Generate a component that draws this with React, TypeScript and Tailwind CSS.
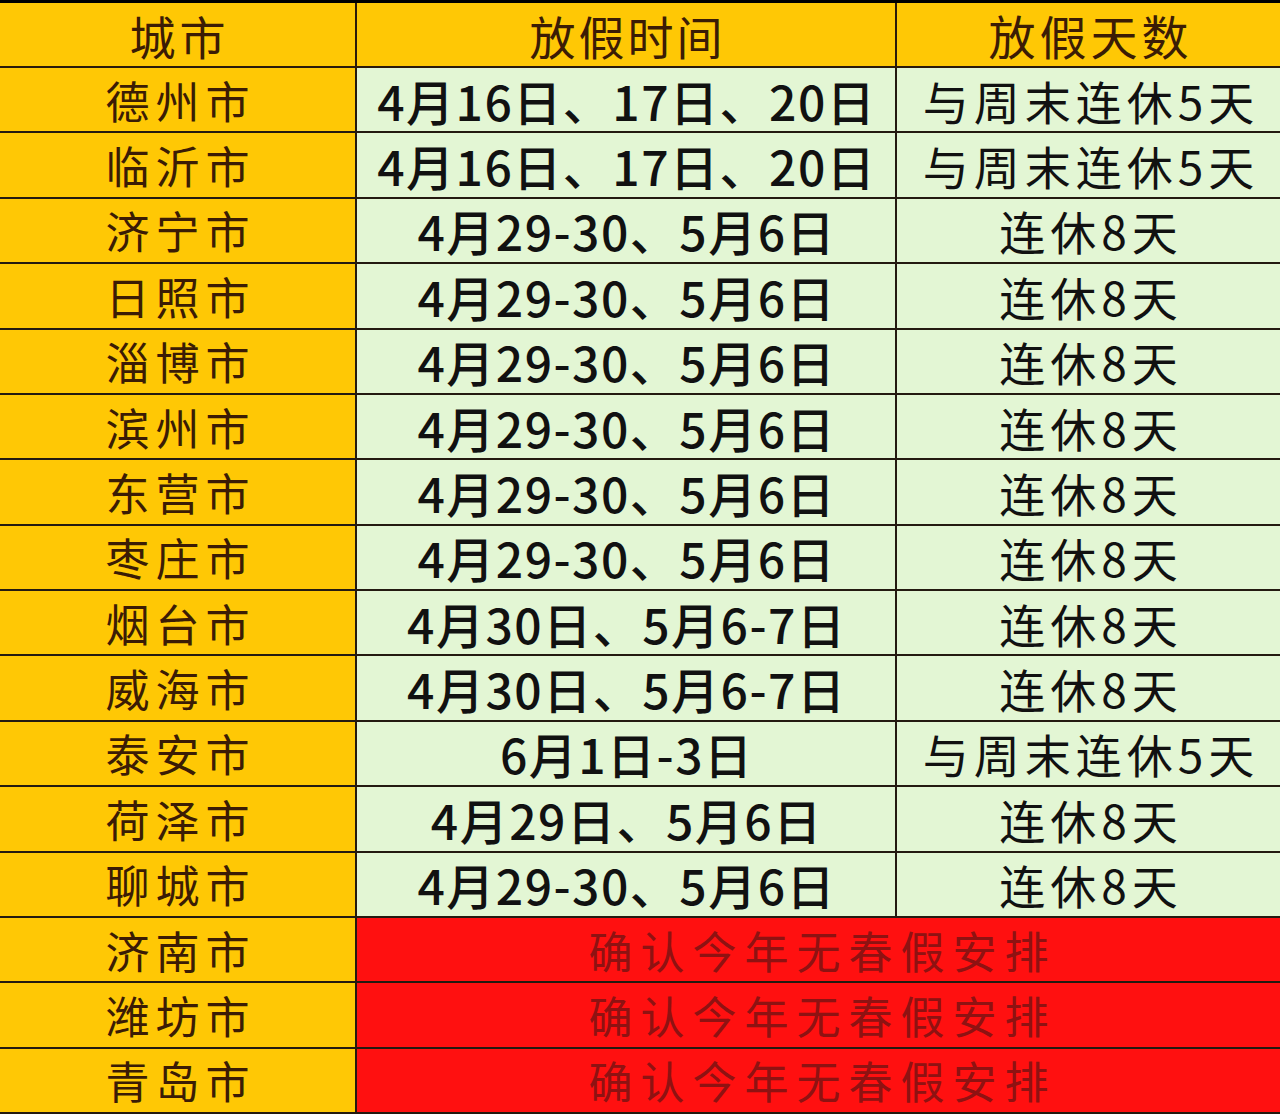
import React from "react";

const rows: { city: string; time?: string; days?: string }[] = [
  { city: "德州市", time: "4月16日、17日、20日", days: "与周末连休5天" },
  { city: "临沂市", time: "4月16日、17日、20日", days: "与周末连休5天" },
  { city: "济宁市", time: "4月29-30、5月6日", days: "连休8天" },
  { city: "日照市", time: "4月29-30、5月6日", days: "连休8天" },
  { city: "淄博市", time: "4月29-30、5月6日", days: "连休8天" },
  { city: "滨州市", time: "4月29-30、5月6日", days: "连休8天" },
  { city: "东营市", time: "4月29-30、5月6日", days: "连休8天" },
  { city: "枣庄市", time: "4月29-30、5月6日", days: "连休8天" },
  { city: "烟台市", time: "4月30日、5月6-7日", days: "连休8天" },
  { city: "威海市", time: "4月30日、5月6-7日", days: "连休8天" },
  { city: "泰安市", time: "6月1日-3日", days: "与周末连休5天" },
  { city: "荷泽市", time: "4月29日、5月6日", days: "连休8天" },
  { city: "聊城市", time: "4月29-30、5月6日", days: "连休8天" },
  { city: "济南市" },
  { city: "潍坊市" },
  { city: "青岛市" },
];

const font = { fontFamily: '"Noto Sans CJK SC", "Noto Sans", sans-serif' };

export default function App() {
  return (
    <div
      className="w-[1280px] h-[1114px] overflow-hidden bg-[#ffc805] flex flex-col"
      style={font}
    >
      <div className="h-[68px] shrink-0 flex border-t-[3px] border-b-2 border-t-black border-b-[#2a1a0a] bg-[#ffc805] text-[#3b1c05]">
        <div className="w-[357px] flex items-center justify-center text-[46px] leading-none tracking-[4px] pl-[4px] border-r-2 border-[#2a1a0a]">
          城市
        </div>
        <div className="w-[540px] flex items-center justify-center text-[46px] leading-none tracking-[3px] pl-[3px] border-r-2 border-[#2a1a0a]">
          放假时间
        </div>
        <div className="flex-1 flex items-center justify-center text-[47px] leading-none tracking-[4px] pl-[4px]">
          放假天数
        </div>
      </div>
      {rows.map((r) => (
        <div key={r.city} className="h-[65.375px] shrink-0 flex border-b-2 border-[#241a10]">
          <div className="w-[357px] shrink-0 bg-[#ffc805] text-[#3b1c05] flex items-center justify-center text-[44px] leading-none tracking-[6px] pl-[6px] border-r-2 border-[#241a10]">
            {r.city}
          </div>
          {r.time ? (
            <>
              <div className="w-[540px] shrink-0 bg-[#e3f6d4] text-[#111] flex items-center justify-center text-[48px] leading-none font-medium tracking-[1.5px] pl-[1.5px] border-r-2 border-[#241a10]">
                {r.time}
              </div>
              <div className="flex-1 bg-[#e3f6d4] text-[#111] flex items-center justify-center text-[46px] leading-none tracking-[5px] pl-[5px]">
                {r.days}
              </div>
            </>
          ) : (
            <div className="flex-1 bg-[#ff1010] text-[#8e1212] flex items-center justify-center text-[44px] leading-none tracking-[8px] pl-[8px]">
              确认今年无春假安排
            </div>
          )}
        </div>
      ))}
    </div>
  );
}
